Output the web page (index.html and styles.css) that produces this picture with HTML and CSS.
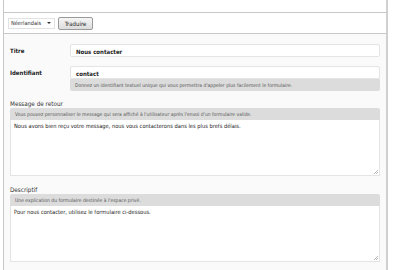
FILE: index.html
```html
<!DOCTYPE html>
<html lang="fr">
<head>
    <meta charset="UTF-8">
    <title>Formulaire</title>
    <link rel="stylesheet" href="styles.css">
</head>
<body>
    <div class="panel">
        <div class="top"></div>

        <div class="toolbar">
            <div class="select">
                <span>Néerlandais</span>
                <span class="caret"></span>
            </div>
            <button class="btn">Traduire</button>
        </div>

        <form class="form">
            <div class="row">
                <label class="label-strong">Titre</label>
                <div class="input strong">Nous contacter</div>
            </div>

            <div class="row">
                <label class="label-strong">Identifiant</label>
                <div>
                    <div class="input strong">contact</div>
                    <div class="help">Donnez un identifiant textuel unique qui vous permettra d'appeler plus facilement le formulaire.</div>
                </div>
            </div>

            <div class="block">
                <label class="label">Message de retour</label>
                <div class="help top-help">Vous pouvez personnaliser le message qui sera affiché à l'utilisateur après l'envoi d'un formulaire valide.</div>
                <div class="textarea">Nous avons bien reçu votre message, nous vous contacterons dans les plus brefs délais.<span class="grip"></span></div>
            </div>

            <div class="block">
                <label class="label">Descriptif</label>
                <div class="help top-help">Une explication du formulaire destinée à l'espace privé.</div>
                <div class="textarea">Pour nous contacter, utilisez le formulaire ci-dessous.<span class="grip"></span></div>
            </div>
        </form>
    </div>
</body>
</html>
```

FILE: styles.css
```css
body {
    margin: 0;
    padding: 0;
    background-color: #fff;
    font-family: "DejaVu Sans Condensed", "Liberation Sans", sans-serif;
    color: #222;
}

.panel {
    margin-left: 3px;
    width: 385px;
    height: 270px;
    border-left: 1px solid #c8c8c8;
    border-right: 2px solid #d0d0d0;
    background-color: #fafafa;
    box-sizing: border-box;
}

.top {
    height: 12px;
    background-color: #fff;
    border-bottom: 1px solid #c8c8c8;
}

.toolbar {
    height: 20px;
    display: flex;
    align-items: center;
    gap: 3px;
    padding-left: 4px;
    background-color: #fff;
    border-bottom: 1px solid #c8c8c8;
}

.select {
    display: flex;
    align-items: center;
    justify-content: space-between;
    width: 47px;
    height: 11px;
    padding: 0 3px 0 2px;
    box-sizing: border-box;
    border: 1px solid #e2e2e2;
    background-color: #fff;
    font-size: 5.6px;
    color: #333;
}

.caret {
    width: 0;
    height: 0;
    border-left: 2px solid transparent;
    border-right: 2px solid transparent;
    border-top: 2px solid #333;
}

.btn {
    width: 35px;
    height: 13px;
    padding: 0;
    font-family: inherit;
    font-size: 6px;
    color: #222;
    border: 1px solid #9a9a9a;
    border-radius: 2px;
    background: linear-gradient(#f6f6f6, #dcdcdc);
}

.form {
    padding: 10px 6px 0 6px;
}

.row {
    display: grid;
    grid-template-columns: 60px 1fr;
    margin-bottom: 9px;
}

.label-strong {
    font-size: 6px;
    font-weight: bold;
    padding-top: 3px;
}

.label {
    display: block;
    font-size: 6.3px;
    color: #333;
    height: 8px;
    line-height: 8px;
}

.input {
    height: 13px;
    line-height: 13px;
    padding: 0 5px;
    box-sizing: border-box;
    background-color: #fff;
    border: 1px solid #e4e4e4;
    border-radius: 2px;
    font-size: 6px;
}

.strong {
    font-weight: bold;
}

.help {
    height: 12px;
    line-height: 12px;
    padding: 0 5px;
    background-color: #dcdcdc;
    border-radius: 0 0 2px 2px;
    font-size: 5px;
    color: #555;
}

.top-help {
    border-radius: 2px 2px 0 0;
}

.block {
    margin-bottom: 10px;
}

.textarea {
    position: relative;
    height: 56px;
    padding: 3px 3px;
    box-sizing: border-box;
    background-color: #fff;
    border: 1px solid #e4e4e4;
    border-top: none;
    font-size: 5.7px;
}

.grip {
    position: absolute;
    right: 1px;
    bottom: 1px;
    width: 4px;
    height: 4px;
    background: linear-gradient(135deg, transparent 45%, #bbb 45%, #bbb 55%, transparent 55%, transparent 70%, #bbb 70%, #bbb 80%, transparent 80%);
}
```
